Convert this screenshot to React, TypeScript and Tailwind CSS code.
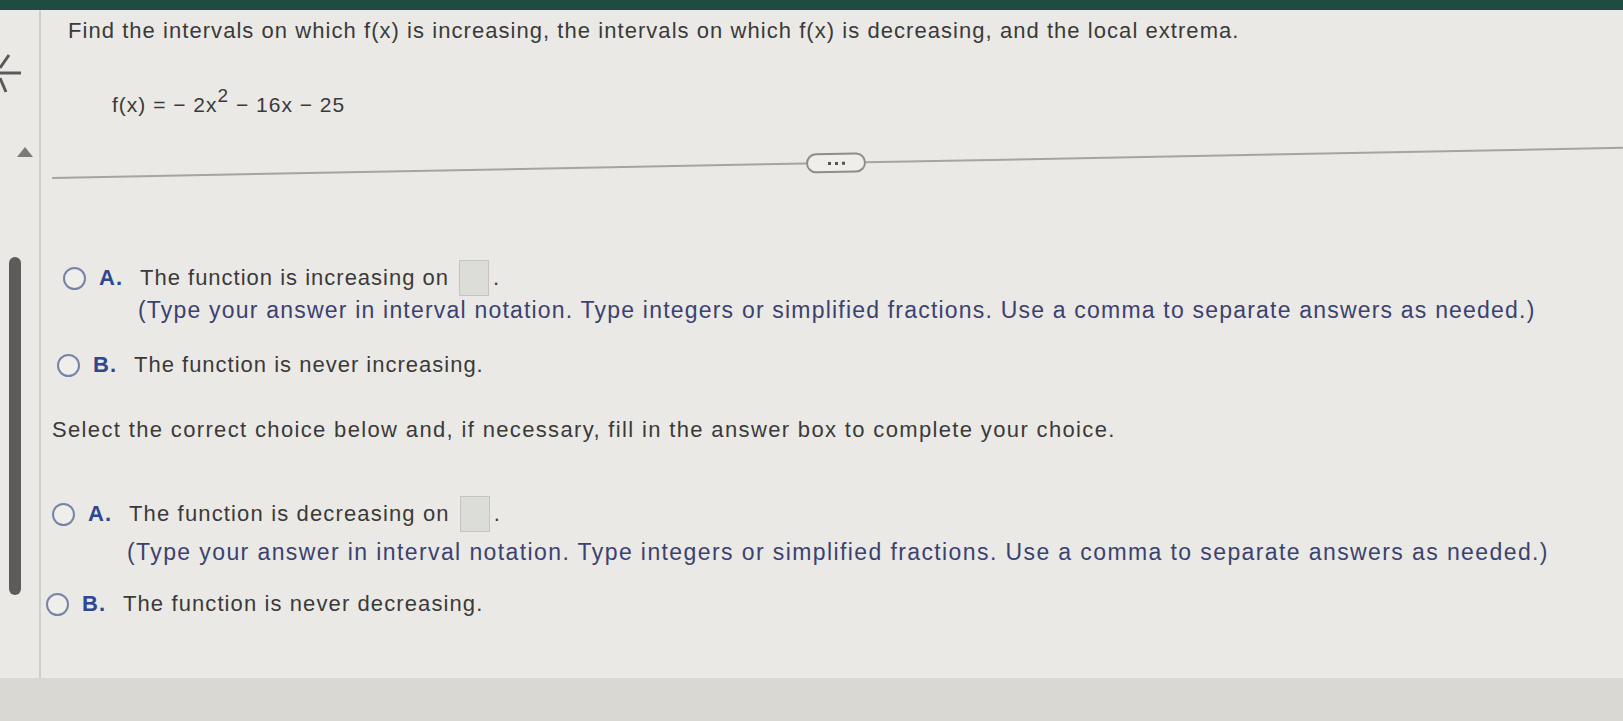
import React from "react";

const font = { fontFamily: '"Liberation Sans", Arial, sans-serif' };

function Radio() {
  return (
    <span className="inline-block h-[23px] w-[23px] shrink-0 rounded-full border-2 border-[#7584a8] bg-[#efeeea]" />
  );
}

function AnswerBox() {
  return <span className="ml-[10px] inline-block h-[36px] w-[30px] border border-[#c4c4c0] bg-[#dcdcd8]" />;
}

function Choice(props: { pl: string; letter: string; children: React.ReactNode; box?: boolean; track?: string }) {
  return (
    <div className={`flex h-[36px] items-center text-[22px] ${props.track || "tracking-[1px]"} ${props.pl}`}>
      <Radio />
      <span className="ml-[13px] w-[41px] font-bold text-[#2f4690]">{props.letter}</span>
      <span className="text-[#3a3a3a]">{props.children}</span>
      {props.box ? (
        <>
          <AnswerBox />
          <span className="ml-[4px] text-[#3a3a3a]">.</span>
        </>
      ) : null}
    </div>
  );
}

export default function App() {
  return (
    <div className="flex h-[721px] w-[1623px] flex-col overflow-hidden bg-[#d9d8d3] text-[21px] leading-[24px]" style={font}>
      <div className="h-[10px] bg-[#1f4c40]" />
      <div className="flex h-[668px] bg-[#eae9e5]">
        {/* left gutter */}
        <div className="flex w-[41px] shrink-0 flex-col border-r-2 border-[#cfcfcb]">
          <svg className="mt-[44px]" width="24" height="40" viewBox="0 0 24 40">
            <path d="M9 1 L0 14 M0 19 L21 19 M0 24 L6 38" stroke="#5a5a5a" strokeWidth="3" fill="none" />
          </svg>
          <svg className="ml-[17px] mt-[53px]" width="16" height="10" viewBox="0 0 16 10">
            <polygon points="8,0 16,10 0,10" fill="#7a7a78" />
          </svg>
          <div className="ml-[9px] mt-[100px] h-[338px] w-[12px] rounded-[6px] bg-[#5c5c5a]" />
        </div>

        {/* main */}
        <div className="flex flex-1 flex-col text-[#3a3a3a]">
          <div className="mt-[9px] pl-[27px] text-[22px] tracking-[1.05px]">
            Find the intervals on which f(x) is increasing, the intervals on which f(x) is decreasing, and the local extrema.
          </div>
          <div className="mt-[50px] pl-[71px] tracking-[1px]">
            f(x) = − 2x<sup className="relative -top-[10px] text-[19px]">2</sup> − 16x − 25
          </div>

          <div className="mt-[36px] flex h-[20px] -rotate-[1.1deg] items-center pl-[11px]">
            <div className="h-[2px] w-[754px] bg-[#a4a4a0]" />
            <div className="flex h-[20px] w-[60px] items-center justify-center gap-[4px] rounded-full border-2 border-[#8d8d8a] bg-[#efeeea]">
              <span className="h-[3px] w-[3px] bg-[#555]" />
              <span className="h-[3px] w-[3px] bg-[#555]" />
              <span className="h-[3px] w-[3px] bg-[#555]" />
            </div>
            <div className="h-[2px] flex-1 bg-[#a4a4a0]" />
          </div>

          <div className="mt-[87px]">
            <Choice pl="pl-[22px]" letter="A." box>
              The function is increasing on
            </Choice>
          </div>
          <div className="mt-[2px] pl-[97px] text-[23px] tracking-[1.2px] text-[#3b4270]">
            (Type your answer in interval notation. Type integers or simplified fractions. Use a comma to separate answers as needed.)
          </div>
          <div className="mt-[25px]">
            <Choice pl="pl-[16px]" letter="B.">
              The function is never increasing.
            </Choice>
          </div>

          <div className="mt-[35px] pl-[11px] text-[22px] tracking-[1.35px]">
            Select the correct choice below and, if necessary, fill in the answer box to complete your choice.
          </div>

          <div className="mt-[54px]">
            <Choice pl="pl-[11px]" letter="A." box track="tracking-[1.15px]">
              The function is decreasing on
            </Choice>
          </div>
          <div className="mt-[8px] pl-[86px] text-[23px] tracking-[1.4px] text-[#3b4270]">
            (Type your answer in interval notation. Type integers or simplified fractions. Use a comma to separate answers as needed.)
          </div>
          <div className="mt-[22px]">
            <Choice pl="pl-[5px]" letter="B." track="tracking-[1.1px]">
              The function is never decreasing.
            </Choice>
          </div>
        </div>
      </div>
    </div>
  );
}
